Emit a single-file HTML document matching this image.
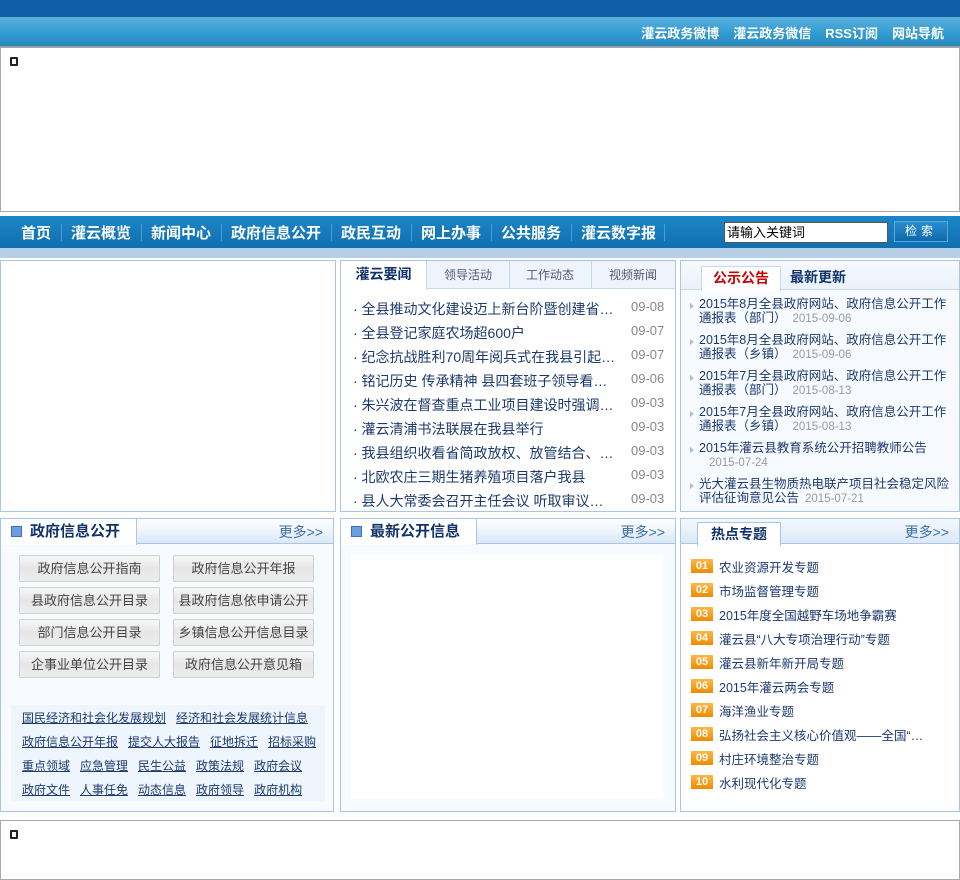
<!DOCTYPE html>
<html><head><meta charset="utf-8"><style>
*{margin:0;padding:0;box-sizing:border-box}
body{width:960px;height:873px;background:#fff;font-family:"Liberation Sans","Noto Sans CJK SC",sans-serif;font-size:12px;color:#1c3a70;position:relative;overflow:hidden}
.a{position:absolute}
a{color:#1c3a70;text-decoration:none}
.top{left:0;top:0;width:960px;height:17px;background:#0f5fa8}
.bar2{left:0;top:17px;width:960px;height:31px;background:linear-gradient(#5ab0dc,#2f9ad1 60%,#2b88bd);border-bottom:2px solid #8a9ba8}
.bar2 span{color:#fff;font-weight:bold;font-size:13px;margin-left:14px}
.box{border:1px solid #a9a9a9;background:#fff}
.ico{width:8px;height:9px;border:2px solid #222;border-radius:1px;background:#fff}
.nav{left:0;top:216px;width:960px;height:32px;background:linear-gradient(#1d86c7,#0f6fb0)}
.nav span{position:absolute;top:6px;color:#fff;font-size:15px;font-weight:bold}
.sep{position:absolute;top:8px;width:1px;height:17px;background:#4a9fd4}
.pan{border:1px solid #a9c6e6;background:#f7faff}
.news div{position:absolute;left:12px;font-size:14px;color:#1c3a70;white-space:nowrap}
.news i{font-style:normal;position:absolute;left:278px;color:#888;font-size:13px}
.btn{position:absolute;width:141px;height:27px;border:1px solid #cfcfcf;border-radius:2px;background:linear-gradient(#f8f8f8,#e6e6e6 50%,#eeeeee);text-align:center;line-height:25px;font-size:13px;color:#444}
.lk{position:absolute;left:21px;font-size:12px;color:#1c3a70;text-decoration:underline;white-space:nowrap;word-spacing:0}
.lk span{margin-right:10px}
.hd{position:absolute;top:0;left:0;right:0;height:25px;background:linear-gradient(#fff,#dbe8f6);border-bottom:1px solid #a9c6e6}
.hdt{position:absolute;top:0;left:0;height:26px;background:#fff;border-right:1px solid #a9c6e6;font-weight:bold;font-size:15px;color:#10336b;line-height:26px}
.more{position:absolute;right:10px;top:3px;color:#3a6fa8;font-size:14px}
.sq{display:inline-block;width:11px;height:11px;background:#6d9fe0;border:1px solid #3c6fbf;margin:0 8px 0 10px;vertical-align:-1px}
.num{position:absolute;left:10px;width:22px;height:14px;background:linear-gradient(#ffb84a,#f08a00);color:#fff;font-size:11px;font-weight:bold;line-height:14px;text-align:center}
.ht{position:absolute;left:38px;font-size:12.5px;color:#1c3a70;white-space:nowrap}
.nt{position:absolute;left:18px;width:252px;font-size:12.5px;line-height:14px;color:#1c3a70}
.nt em{font-style:normal;color:#999;font-size:11.5px;margin-left:6px}
.nt:before{content:"";position:absolute;left:-9px;top:6px;border-left:4px solid #a9c0dc;border-top:3px solid transparent;border-bottom:3px solid transparent}
</style></head><body>
<div class="a top"></div>
<div class="a bar2"><div style="position:absolute;right:16px;top:6px"><span>灌云政务微博</span><span>灌云政务微信</span><span>RSS订阅</span><span>网站导航</span></div></div>
<div class="a box" style="left:0;top:47px;width:960px;height:165px"><div class="a ico" style="left:9px;top:9px"></div></div>
<div class="a nav">
<span style="left:21px">首页</span><div class="sep" style="left:61px"></div>
<span style="left:71px">灌云概览</span><div class="sep" style="left:141px"></div>
<span style="left:151px">新闻中心</span><div class="sep" style="left:221px"></div>
<span style="left:231px">政府信息公开</span><div class="sep" style="left:331px"></div>
<span style="left:341px">政民互动</span><div class="sep" style="left:411px"></div>
<span style="left:421px">网上办事</span><div class="sep" style="left:491px"></div>
<span style="left:501px">公共服务</span><div class="sep" style="left:571px"></div>
<span style="left:581px">灌云数字报</span><div class="sep" style="left:664px"></div>
<div class="a" style="left:724px;top:6px;width:164px;height:21px;background:#fff;border:1px solid #555;font-size:13px;color:#000;line-height:19px;padding-left:2px">请输入关键词</div>
<div class="a" style="left:894px;top:5px;width:54px;height:21px;background:linear-gradient(#2a8ed0,#0d6aab);border:1px solid #5aa7da;color:#fff;font-size:12px;text-align:center;line-height:19px;letter-spacing:4px">检索</div>
</div>
<div class="a" style="left:0;top:248px;width:960px;height:10px;background:#b6cfe6"></div>

<div class="a pan" style="left:0;top:260px;width:336px;height:252px;background:#fff"></div>

<div class="a pan" style="left:340px;top:260px;width:336px;height:252px;background:#fff">
<div class="a" style="left:0;top:0;width:334px;height:28px;background:#eef4fb;border-bottom:1px solid #c6d9ee"></div>
<div class="a" style="left:0;top:0;width:86px;height:29px;background:#fff;border-right:1px solid #c6d9ee;font-weight:bold;font-size:14px;color:#10336b;text-align:center;line-height:27px">灌云要闻</div>
<div class="a" style="left:86px;top:5px;width:82px;text-align:center;color:#557;font-size:12px">领导活动</div>
<div class="a" style="left:168px;top:0;width:1px;height:28px;background:#c6d9ee"></div>
<div class="a" style="left:168px;top:5px;width:82px;text-align:center;color:#557;font-size:12px">工作动态</div>
<div class="a" style="left:250px;top:0;width:1px;height:28px;background:#c6d9ee"></div>
<div class="a" style="left:250px;top:5px;width:84px;text-align:center;color:#557;font-size:12px">视频新闻</div>
<div class="news">
<div style="top:38px">· 全县推动文化建设迈上新台阶暨创建省…<i>09-08</i></div>
<div style="top:62px">· 全县登记家庭农场超600户<i>09-07</i></div>
<div style="top:86px">· 纪念抗战胜利70周年阅兵式在我县引起…<i>09-07</i></div>
<div style="top:110px">· 铭记历史 传承精神 县四套班子领导看…<i>09-06</i></div>
<div style="top:134px">· 朱兴波在督查重点工业项目建设时强调…<i>09-03</i></div>
<div style="top:158px">· 灌云清浦书法联展在我县举行<i>09-03</i></div>
<div style="top:182px">· 我县组织收看省简政放权、放管结合、…<i>09-03</i></div>
<div style="top:206px">· 北欧农庄三期生猪养殖项目落户我县<i>09-03</i></div>
<div style="top:230px">· 县人大常委会召开主任会议 听取审议…<i>09-03</i></div>
</div></div>

<div class="a pan" style="left:680px;top:260px;width:280px;height:252px">
<div class="a" style="left:0;top:0;width:278px;height:29px;background:linear-gradient(#f7faff,#e9f1fa);border-bottom:1px solid #c6d9ee"></div>
<div class="a" style="left:20px;top:5px;width:80px;height:25px;background:#fff;border:1px solid #c6d9ee;border-bottom:none;color:#c00;font-weight:bold;font-size:14px;text-align:center;line-height:22px">公示公告</div>
<div class="a" style="left:109px;top:6px;color:#10336b;font-weight:bold;font-size:14px">最新更新</div>
<div class="nt" style="top:36px">2015年8月全县政府网站、政府信息公开工作通报表（部门）<em>2015-09-06</em></div>
<div class="nt" style="top:72px">2015年8月全县政府网站、政府信息公开工作通报表（乡镇）<em>2015-09-06</em></div>
<div class="nt" style="top:108px">2015年7月全县政府网站、政府信息公开工作通报表（部门）<em>2015-08-13</em></div>
<div class="nt" style="top:144px">2015年7月全县政府网站、政府信息公开工作通报表（乡镇）<em>2015-08-13</em></div>
<div class="nt" style="top:180px">2015年灌云县教育系统公开招聘教师公告<br><em style="margin-left:10px">2015-07-24</em></div>
<div class="nt" style="top:216px">光大灌云县生物质热电联产项目社会稳定风险评估征询意见公告<em>2015-07-21</em></div>
</div>

<div class="a pan" style="left:0;top:518px;width:334px;height:294px">
<div class="hd"></div><div class="hdt" style="width:136px"><span class="sq"></span>政府信息公开</div><div class="more">更多&gt;&gt;</div>
<div class="btn" style="left:18px;top:36px">政府信息公开指南</div><div class="btn" style="left:172px;top:36px">政府信息公开年报</div>
<div class="btn" style="left:18px;top:68px">县政府信息公开目录</div><div class="btn" style="left:172px;top:68px">县政府信息依申请公开</div>
<div class="btn" style="left:18px;top:100px">部门信息公开目录</div><div class="btn" style="left:172px;top:100px">乡镇信息公开信息目录</div>
<div class="btn" style="left:18px;top:132px">企事业单位公开目录</div><div class="btn" style="left:172px;top:132px">政府信息公开意见箱</div>
<div class="a" style="left:10px;top:186px;width:314px;height:96px;background:#eef5fc"></div>
<div class="lk" style="top:190px"><span>国民经济和社会化发展规划</span><span>经济和社会发展统计信息</span></div>
<div class="lk" style="top:214px"><span>政府信息公开年报</span><span>提交人大报告</span><span>征地拆迁</span><span>招标采购</span></div>
<div class="lk" style="top:238px"><span>重点领域</span><span>应急管理</span><span>民生公益</span><span>政策法规</span><span>政府会议</span></div>
<div class="lk" style="top:262px"><span>政府文件</span><span>人事任免</span><span>动态信息</span><span>政府领导</span><span>政府机构</span></div>
</div>

<div class="a pan" style="left:340px;top:518px;width:336px;height:294px">
<div class="hd"></div><div class="hdt" style="width:136px"><span class="sq"></span>最新公开信息</div><div class="more">更多&gt;&gt;</div>
<div class="a" style="left:10px;top:36px;width:312px;height:244px;background:#fff"></div>
</div>

<div class="a pan" style="left:680px;top:518px;width:280px;height:294px;background:#fff">
<div class="hd" style="background:linear-gradient(#f4f8fd,#dbe8f6)"></div>
<div class="a" style="left:16px;top:3px;width:84px;height:24px;background:#fff;border:1px solid #a9c6e6;border-bottom:none;font-weight:bold;font-size:14px;color:#10336b;text-align:center;line-height:22px">热点专题</div>
<div class="more">更多&gt;&gt;</div>
<div class="num" style="top:40px">01</div><div class="ht" style="top:38px">农业资源开发专题</div>
<div class="num" style="top:64px">02</div><div class="ht" style="top:62px">市场监督管理专题</div>
<div class="num" style="top:88px">03</div><div class="ht" style="top:86px">2015年度全国越野车场地争霸赛</div>
<div class="num" style="top:112px">04</div><div class="ht" style="top:110px">灌云县“八大专项治理行动”专题</div>
<div class="num" style="top:136px">05</div><div class="ht" style="top:134px">灌云县新年新开局专题</div>
<div class="num" style="top:160px">06</div><div class="ht" style="top:158px">2015年灌云两会专题</div>
<div class="num" style="top:184px">07</div><div class="ht" style="top:182px">海洋渔业专题</div>
<div class="num" style="top:208px">08</div><div class="ht" style="top:206px">弘扬社会主义核心价值观——全国“…</div>
<div class="num" style="top:232px">09</div><div class="ht" style="top:230px">村庄环境整治专题</div>
<div class="num" style="top:256px">10</div><div class="ht" style="top:254px">水利现代化专题</div>
</div>

<div class="a box" style="left:0;top:820px;width:960px;height:60px"><div class="a ico" style="left:9px;top:9px"></div></div>
</body></html>
